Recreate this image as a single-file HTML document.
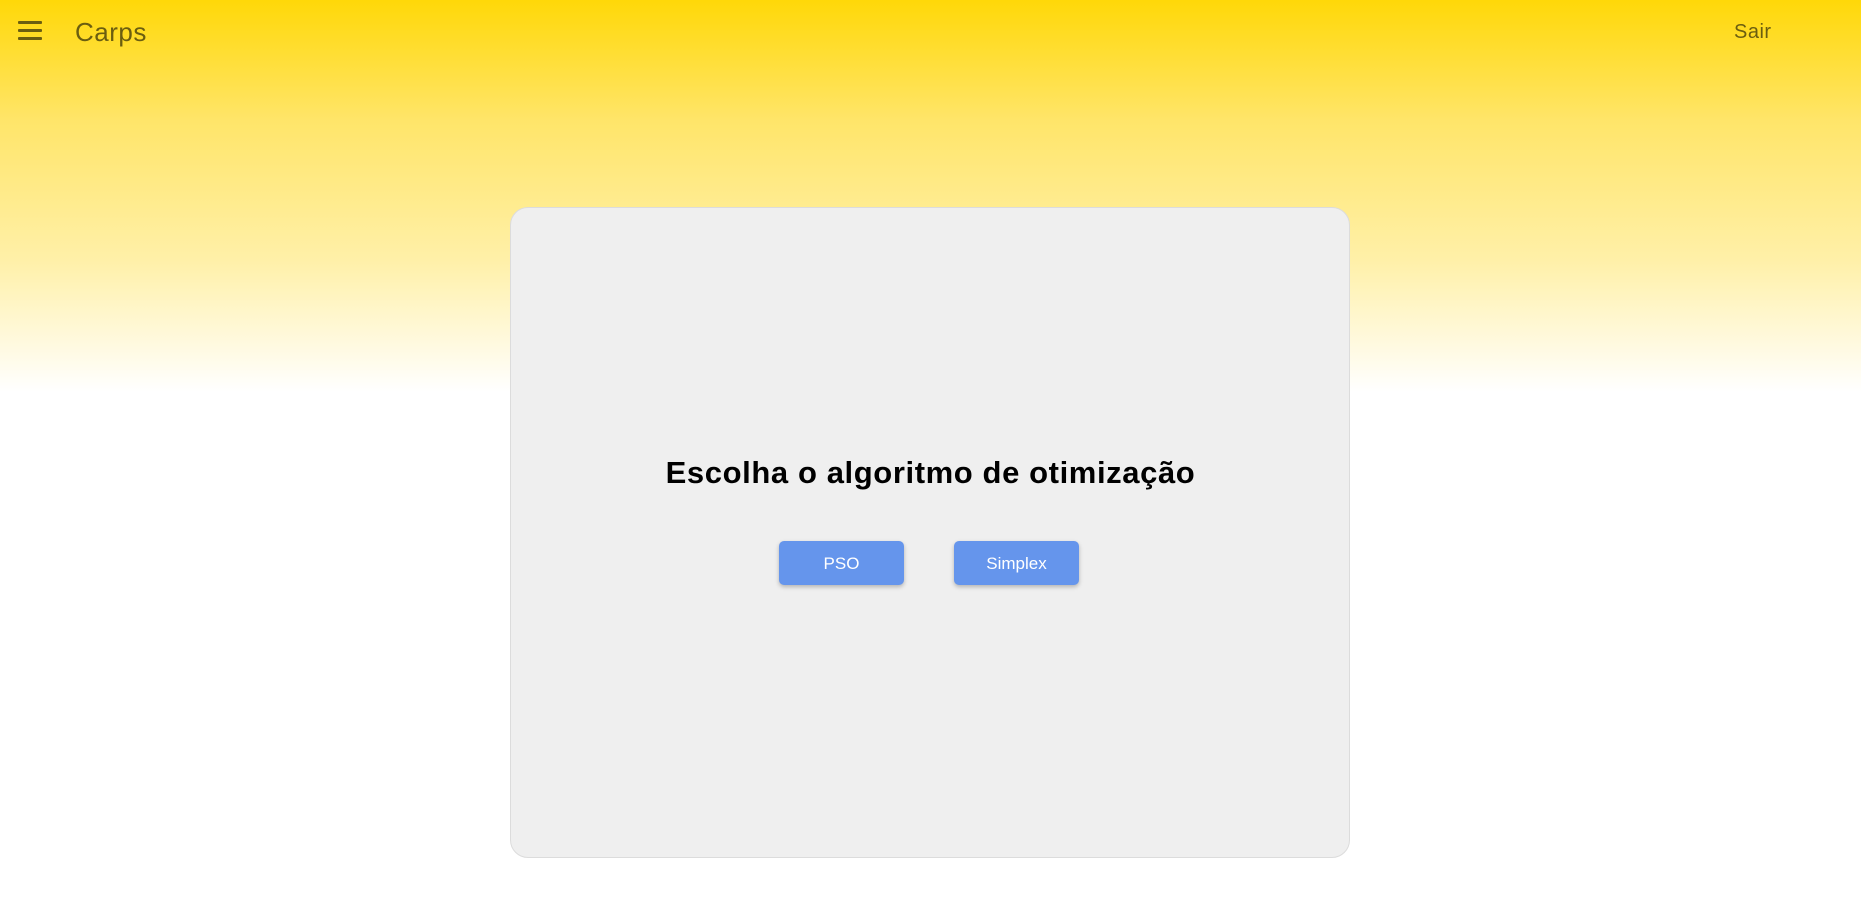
<!DOCTYPE html>
<html><head><meta charset="utf-8"><style>
html,body{margin:0;padding:0;}
body{width:1861px;height:922px;position:relative;overflow:hidden;font-family:"Liberation Sans",sans-serif;
background:linear-gradient(to bottom,#ffd808 0px,#ffe569 120px,#fff0a8 260px,#ffffff 392px,#ffffff 100%);}
.hb{position:absolute;left:18px;top:21px;width:24px;}
.hb div{height:3px;background:#6b5e10;margin-bottom:5px;border-radius:1px;}
.title{position:absolute;left:75px;top:17px;font-size:26px;color:#6b5e10;letter-spacing:0.5px;}
.sair{position:absolute;left:1734px;top:21px;font-size:20px;color:#6b5e10;letter-spacing:0.5px;}
.card{position:absolute;left:510px;top:207px;width:840px;height:651px;background:#efefef;border:1.5px solid #dcdcdc;border-radius:18px;box-sizing:border-box;}
h1{position:absolute;left:0;right:0;top:455px;margin:0;text-align:center;font-size:31px;font-weight:bold;color:#000;letter-spacing:0.6px;}
.btn{position:absolute;top:541px;width:125px;height:44px;background:#6595ec;color:#fff;border-radius:5px;font-size:17px;line-height:46px;text-align:center;box-shadow:0 2px 4px rgba(0,0,0,.25);}
</style></head><body>
<div class="hb"><div></div><div></div><div></div></div>
<div class="title">Carps</div>
<div class="sair">Sair</div>
<div class="card"></div>
<h1>Escolha o algoritmo de otimização</h1>
<div class="btn" style="left:779px">PSO</div>
<div class="btn" style="left:954px">Simplex</div>
</body></html>
